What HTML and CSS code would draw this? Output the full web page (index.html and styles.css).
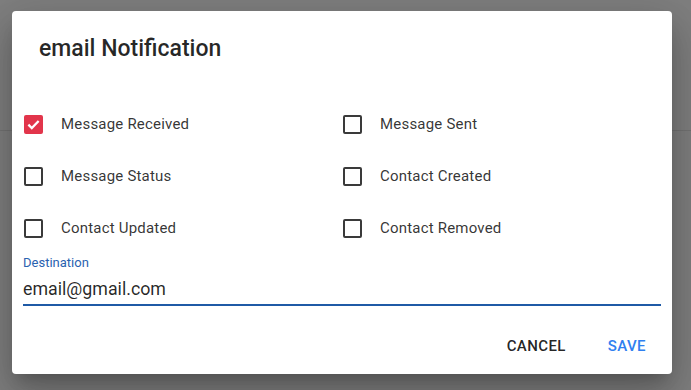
FILE: index.html
```html
<!DOCTYPE html>
<html lang="en">
<head>
    <meta charset="UTF-8">
    <meta name="viewport" content="width=device-width, initial-scale=1.0">
    <title>email Notification</title>
    <link rel="stylesheet" href="styles.css">
</head>
<body>
    <div class="page">
        <div class="pageBar"></div>
    </div>
    <div class="backdrop"></div>

    <div class="dialog">
        <h2 class="dialogTitle">email Notification</h2>
        <div class="dialogContent">
            <div class="checkGrid">
                <label class="checkItem">
                    <span class="checkBox checked">
                        <svg viewBox="0 0 20 20" width="19" height="19"><path d="M4.6 10.2l3.6 3.5 7.2-7.4" fill="none" stroke="#fff" stroke-width="2.4"/></svg>
                    </span>
                    <span class="checkLabel">Message Received</span>
                </label>
                <label class="checkItem">
                    <span class="checkBox"></span>
                    <span class="checkLabel">Message Sent</span>
                </label>
                <label class="checkItem">
                    <span class="checkBox"></span>
                    <span class="checkLabel">Message Status</span>
                </label>
                <label class="checkItem">
                    <span class="checkBox"></span>
                    <span class="checkLabel">Contact Created</span>
                </label>
                <label class="checkItem">
                    <span class="checkBox"></span>
                    <span class="checkLabel">Contact Updated</span>
                </label>
                <label class="checkItem">
                    <span class="checkBox"></span>
                    <span class="checkLabel">Contact Removed</span>
                </label>
            </div>
            <div class="field">
                <label for="destination" class="fieldLabel">Destination</label>
                <input type="text" id="destination" class="fieldInput" value="email@gmail.com">
            </div>
        </div>
        <div class="dialogActions">
            <button class="btn">Cancel</button>
            <button class="btn btnPrimary">Save</button>
        </div>
    </div>
</body>
</html>
```

FILE: styles.css
```css
body {
    margin: 0;
    height: 390px;
    overflow: hidden;
    font-family: Roboto, "Liberation Sans", sans-serif;
    background-color: #fff;
}
.page {
    height: 390px;
}
.pageBar {
    height: 130px;
    border-bottom: 1px solid #e6e6e6;
}
.backdrop {
    position: absolute;
    top: 0;
    left: 0;
    right: 0;
    bottom: 0;
    background-color: rgba(0, 0, 0, 0.5);
}
.dialog {
    position: absolute;
    top: 11px;
    left: 12px;
    width: 660px;
    height: 363px;
    background-color: #fff;
    border-radius: 4px;
    box-shadow: 0 11px 15px -7px rgba(0, 0, 0, 0.2), 0 24px 38px 3px rgba(0, 0, 0, 0.14), 0 9px 46px 8px rgba(0, 0, 0, 0.12);
    display: flex;
    flex-direction: column;
}
.dialogTitle {
    margin: 0;
    padding: 26px 27px 0;
    font-size: 23px;
    font-weight: 500;
    line-height: 24px;
    color: rgba(0, 0, 0, 0.85);
}
.dialogContent {
    padding: 37px 11px 0 11px;
}
.checkGrid {
    display: grid;
    grid-template-columns: 1fr 1fr;
    grid-auto-rows: 52px;
}
.checkItem {
    display: flex;
    align-items: center;
    gap: 18px;
    padding-left: 1px;
    cursor: pointer;
}
.checkBox {
    width: 19px;
    height: 19px;
    box-sizing: border-box;
    border: 2px solid #3a3a3a;
    border-radius: 2px;
    display: flex;
    align-items: center;
    justify-content: center;
}
.checkBox.checked {
    border: none;
    background-color: #e2354b;
}
.checkLabel {
    font-size: 15px;
    color: rgba(0, 0, 0, 0.8);
    letter-spacing: 0.2px;
}
.field {
    display: flex;
    flex-direction: column;
    margin-top: 1px;
}
.fieldLabel {
    font-size: 13px;
    line-height: 16px;
    color: #2a62b0;
}
.fieldInput {
    font-family: inherit;
    font-size: 17.8px;
    line-height: 20px;
    color: rgba(0, 0, 0, 0.85);
    border: none;
    border-bottom: 2px solid #1f5aa6;
    outline: none;
    padding: 8px 0 5px;
    margin: 0;
    background: none;
}
.dialogActions {
    margin-top: auto;
    display: flex;
    justify-content: flex-end;
    gap: 26px;
    padding: 0 18px 10px 0;
}
.btn {
    font-family: inherit;
    font-size: 15px;
    font-weight: 500;
    text-transform: uppercase;
    letter-spacing: 0.4px;
    background: none;
    border: none;
    padding: 0 8px;
    height: 36px;
    color: rgba(0, 0, 0, 0.87);
    cursor: pointer;
}
.btnPrimary {
    color: #2f80f0;
}
```
